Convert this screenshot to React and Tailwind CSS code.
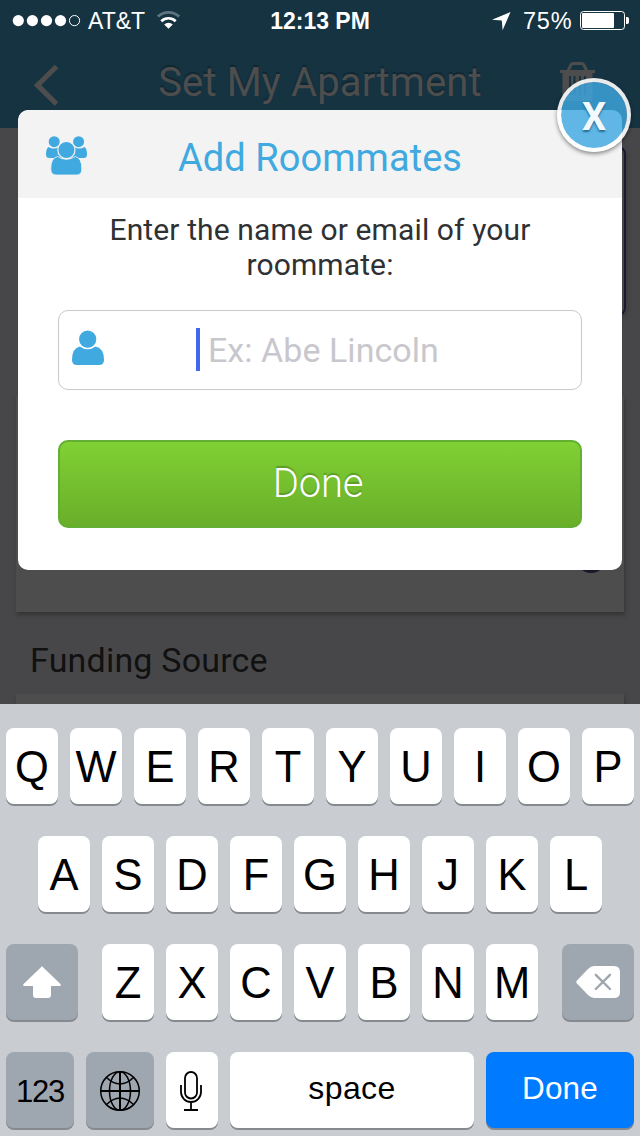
import React from "react";

const keyBase = "flex h-[76px] items-center justify-center rounded-[8px] shadow-[0_2px_0_#86898d]";

function LetterKey({ children }) {
  return (
    <button className={`${keyBase} w-[52px] bg-white pt-[4px] text-[43.5px] leading-none text-black`}>
      {children}
    </button>
  );
}

function StatusBar() {
  return (
    <div className="flex h-10 items-center font-['Liberation_Sans',sans-serif] text-[23px] leading-[40px] text-white">
      <svg className="ml-3 shrink-0" width="70" height="40" viewBox="12 0 70 40" fill="white">
        <circle cx="18.3" cy="20.6" r="5.6" />
        <circle cx="32.4" cy="20.6" r="5.6" />
        <circle cx="46.5" cy="20.6" r="5.6" />
        <circle cx="60.5" cy="20.6" r="5.6" />
        <circle cx="74.5" cy="20.6" r="5.1" fill="none" stroke="white" strokeWidth="1" />
      </svg>
      <span className="ml-[6px] w-[64px] pt-[2px]">AT&amp;T</span>
      <svg className="ml-[3px] shrink-0" width="28" height="40" viewBox="155 0 28 40" fill="none">
        <path d="M157.8 16.6a15.500 15.500 0 0 1 21.400 0" stroke="#60747f" strokeWidth="2.800" />
        <path d="M161.300 21.200a10.300 10.300 0 0 1 14.400 0" stroke="white" strokeWidth="2.600" />
        <path d="M168.500 28.800l-4.300-4.400a6.200 6.200 0 0 1 8.600 0z" fill="white" />
      </svg>
      <span className="ml-[87px] w-[100px] whitespace-nowrap pt-[2px] text-center font-bold">12:13 PM</span>
      <svg className="ml-[121px] shrink-0" width="22" height="40" viewBox="491 0 22 40" fill="white">
        <path d="M510.500 12L492 19.800L501.800 20.600L502.600 30.200Z" />
      </svg>
      <span className="ml-[10px] w-[55px] pt-[2px] text-[23.5px] tracking-[0.8px]">75%</span>
      <svg className="shrink-0" width="52" height="40" viewBox="578 0 52 40" fill="white">
        <rect x="580.5" y="11.5" width="44" height="18" rx="3" fill="none" stroke="white" strokeWidth="1" />
        <rect x="582" y="13" width="32" height="15" rx="1" />
        <path d="M626 17h1.2q1.8 0 1.8 2v3q0 2-1.8 2H626z" />
      </svg>
    </div>
  );
}

function DimmedPage() {
  return (
    <div className="flex h-[704px] flex-col overflow-hidden bg-[#474749] font-[Roboto,sans-serif] [grid-area:1/1]">
      <header className="h-32 shrink-0 bg-[#163342]">
        <StatusBar />
        <div className="flex h-[86px] items-center text-[#4d4d4d]">
          <svg className="ml-[30px] shrink-0" width="34" height="86" viewBox="30 40 34 86">
            <path d="M56.5 66.5L37.5 85.2L56.5 104" fill="none" stroke="currentColor" strokeWidth="5.2" />
          </svg>
          <h1 className="w-[512px] whitespace-nowrap text-center text-[40px] leading-[86px] tracking-[0.15px] [text-shadow:0_-2px_1px_#112733]">
            Set My Apartment
          </h1>
          <svg className="-ml-[18px] shrink-0" width="40" height="86" viewBox="558 40 40 86" fill="currentColor">
            <path d="M568 71l3-6.200q.800-1.300 2.400-1.300h8q1.600 0 2.400 1.300l3 6.200" fill="none" stroke="currentColor" strokeWidth="3" />
            <path fillRule="evenodd" d="M560 70h35v3h-2.500v24q0 4-4 4h-22q-4 0-4-4v-24h-2.500zM569 76v19h2v-19zM573.500 76v19h2v-19zM579 76v19h2v-19zM584 76v19h2v-19z" />
          </svg>
        </div>
      </header>
      <section className="ml-[22px] mt-[18px] h-[170px] w-[604px] shrink-0 rounded-[8px] border-2 border-[#1b1930] shadow-[2px_3px_4px_#3d3d3e]" />
      <section className="mx-4 mt-[80px] flex h-[216px] shrink-0 items-end justify-end bg-[#4d4d4d] shadow-[1px_3px_4px_#343435]">
        <span className="mb-[39px] mr-[17px] size-8 rounded-full bg-[#18172b]" />
      </section>
      <h2 className="ml-[30px] h-[82px] shrink-0 pt-[7px] text-[34px] leading-[82px] tracking-[0.2px] text-[#111]">
        Funding Source
      </h2>
      <section className="mx-4 h-4 shrink-0 bg-[#4d4d4d] shadow-[1px_3px_4px_#343435]" />
    </div>
  );
}

function PeopleIcon() {
  return (
    <svg className="shrink-0" width="44" height="44" viewBox="44 133 44 44" fill="#40a9e0">
      <circle cx="54.200" cy="141.700" r="5.500" />
      <circle cx="78.600" cy="141.700" r="5.500" />
      <path d="M48.500 147q5.200 3.200 10.500 0L62 158h-12.500q-3.500 0-3.500-3.500q0-6 2.500-7.500z" />
      <path d="M84.500 147q-5.200 3.200-10.500 0L71 158h12.500q3.500 0 3.500-3.500q0-6-2.500-7.500z" />
      <path d="M57.500 156.500q9 5.500 17.800 0q6.700 1.500 6.500 12.500q0 6-5.500 6h-20q-5.500 0-5.500-6q-.200-11 6.700-12.500z" stroke="#f3f3f3" strokeWidth=".8" />
      <circle cx="66.400" cy="150" r="8.600" stroke="#f3f3f3" strokeWidth="1.200" />
    </svg>
  );
}

function AddRoommatesDialog() {
  return (
    <div className="relative ml-[18px] mt-[110px] flex h-[460px] w-[604px] flex-col rounded-[10px] bg-white font-[Roboto,sans-serif] [grid-area:1/1]">
      <div className="flex h-[88px] shrink-0 items-center rounded-t-[12px] bg-[#f3f3f3]">
        <div className="ml-[26px] pt-[2px]">
          <PeopleIcon />
        </div>
        <h2 className="w-[464px] whitespace-nowrap pt-[8px] text-center text-[38px] leading-[44px] tracking-[0.05px] text-[#40a9e0]">
          Add Roommates
        </h2>
      </div>
      <p className="mt-[14px] text-center text-[30px] leading-[35px] tracking-[0.12px] text-[#2f3133]">
        Enter the name or email of your
        <br />
        roommate:
      </p>
      <div className="mx-10 mt-[28px] flex h-20 shrink-0 items-center rounded-[10px] border border-[#c9c9cb]">
        <svg className="ml-[11px] shrink-0" width="36" height="40" viewBox="70 330 36 40" fill="#40a9e0">
          <circle cx="87.700" cy="339.200" r="8.600" />
          <path d="M79.800 346.500q7.900 5.600 15.800 0q8.400 1.700 8.400 13.500q0 5-5 5h-22q-5 0-5-5q0-11.800 7.800-13.500z" />
        </svg>
        <span className="ml-[90px] mt-[-2px] h-[43px] w-1 bg-[#4169ec]" />
        <span className="ml-[8px] text-[34px] leading-[40px] tracking-[0.05px] text-[#c8c7cd]">Ex: Abe Lincoln</span>
      </div>
      <button className="mx-10 mt-[50px] h-[88px] shrink-0 rounded-[10px] border-2 border-[#63af33] bg-linear-to-b from-[#80d134] to-[#69ae29] pr-[4px] text-center text-[40px] font-light leading-[82px] tracking-[-0.2px] text-white [text-shadow:0_-2px_1px_#5b9c28]">
        Done
      </button>
      <button className="absolute -right-[9px] -top-[32px] size-[74px] rounded-full border-4 border-white/90 bg-[rgba(62,169,226,0.81)] bg-clip-padding text-center text-[38px] font-bold leading-[70px] text-[#f3f8fd] shadow-[0_2px_4px_rgba(0,0,0,0.45)] [text-shadow:0_2px_2px_#246b94]">
        X
      </button>
    </div>
  );
}

function Keyboard() {
  return (
    <div className="flex h-[432px] flex-col gap-8 self-end bg-[#c9cdd2] px-[6px] pt-6 font-['Liberation_Sans',sans-serif] [grid-area:1/1]">
      <div className="flex gap-3">
        {"QWERTYUIOP".split("").map((k) => (
          <LetterKey key={k}>{k}</LetterKey>
        ))}
      </div>
      <div className="flex gap-3 pl-8">
        {"ASDFGHJKL".split("").map((k) => (
          <LetterKey key={k}>{k}</LetterKey>
        ))}
      </div>
      <div className="flex justify-between">
        <button className={`${keyBase} w-[72px] bg-[#9ea6b0]`}>
          <svg width="72" height="76" viewBox="6 944 72 76" fill="white">
            <path d="M42 966.300L60.700 984.300q.500 1.700-.700 1.700H51v9q0 3-3 3H36q-3 0-3-3v-9h-9q-1.200 0-.700-1.700z" />
          </svg>
        </button>
        <div className="flex gap-3">
          {"ZXCVBNM".split("").map((k) => (
            <LetterKey key={k}>{k}</LetterKey>
          ))}
        </div>
        <button className={`${keyBase} w-[72px] bg-[#9ea6b0]`}>
          <svg width="72" height="76" viewBox="562 944 72 76">
            <path d="M576.500 981Q576 982 576.500 983L588 995q3 3 6 3h20q6 0 6-6v-20q0-6-6-6h-20q-3 0-6 3z" fill="white" />
            <path d="M595.800 974.800l14.200 14.200M610 974.800l-14.200 14.200" stroke="#9ea6b0" strokeWidth="2.400" strokeLinecap="round" />
          </svg>
        </button>
      </div>
      <div className="flex gap-3 text-black">
        <button className={`${keyBase} w-[68px] bg-[#9ea6b0] pt-[4px] text-[31px] tracking-[-1.2px]`}>123</button>
        <button className={`${keyBase} w-[68px] bg-[#9ea6b0]`}>
          <svg width="68" height="76" viewBox="86 1052 68 76" fill="none" stroke="black" strokeWidth="1.500">
            <circle cx="120" cy="1091" r="19.300" />
            <ellipse cx="120" cy="1091" rx="10.500" ry="19.300" />
            <path d="M120 1071.500v39M100.500 1091h39" strokeWidth="2" />
            <path d="M106.500 1077.500q13.500 13 27 0M106.500 1104.500q13.500-13 27 0" />
          </svg>
        </button>
        <button className={`${keyBase} w-[52px] bg-white`}>
          <svg width="52" height="76" viewBox="166 1052 52 76" fill="none" stroke="black" strokeWidth="1.800">
            <rect x="185" y="1072" width="12" height="26.500" rx="6" />
            <path d="M181 1085v7a10 10 0 0 0 20 0v-7M191 1102v8M184 1110h14" />
          </svg>
        </button>
        <button className={`${keyBase} w-[244px] bg-white pb-[5px] text-[32px] leading-none tracking-[0.4px]`}>space</button>
        <button className={`${keyBase} w-[148px] bg-[#007aff] pb-[2px] text-[31.500px] leading-none tracking-[0.2px] text-white`}>
          Done
        </button>
      </div>
    </div>
  );
}

export default function App() {
  return (
    <main className="grid h-[1136px] w-[640px] grid-cols-1 grid-rows-1 items-start overflow-hidden">
      <DimmedPage />
      <AddRoommatesDialog />
      <Keyboard />
    </main>
  );
}
